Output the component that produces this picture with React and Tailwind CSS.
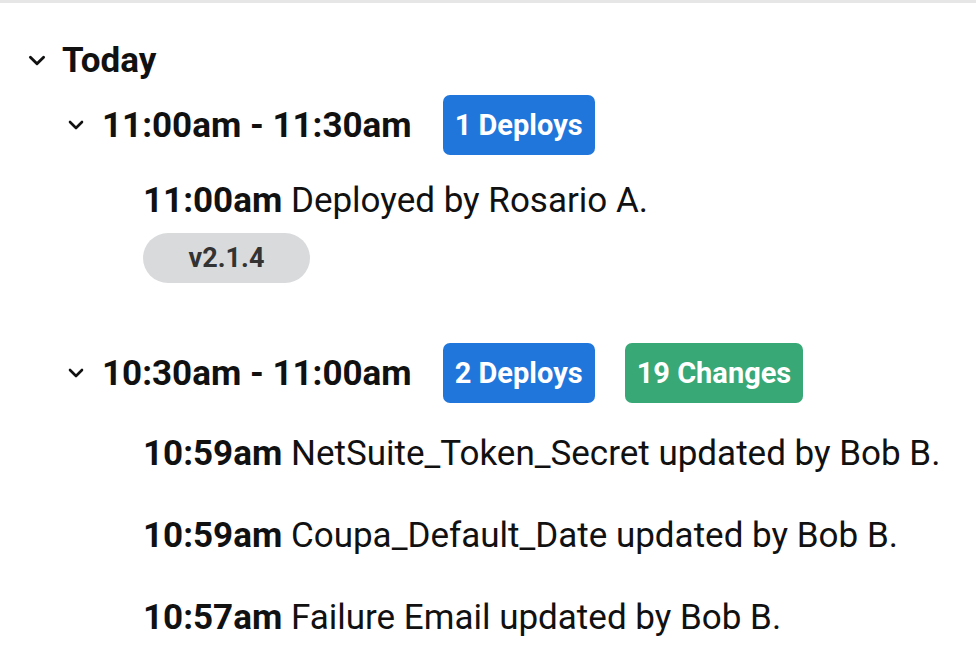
const Chevron = ({ className }) => (
  <svg className={className} viewBox="0 0 16 10" fill="none" stroke="#111" strokeWidth="2.6" strokeLinecap="round" strokeLinejoin="round">
    <path d="M2 2l6 6 6-6" />
  </svg>
);

const groups = [
  {
    range: "11:00am - 11:30am",
    badges: [{ label: "1 Deploys", color: "bg-[#2176db]" }],
    items: [{ time: "11:00am", text: "Deployed by Rosario A.", tag: "v2.1.4" }],
  },
  {
    range: "10:30am - 11:00am",
    badges: [
      { label: "2 Deploys", color: "bg-[#2176db]" },
      { label: "19 Changes", color: "bg-[#38a876]" },
    ],
    items: [
      { time: "10:59am", text: "NetSuite_Token_Secret updated by Bob B." },
      { time: "10:59am", text: "Coupa_Default_Date updated by Bob B." },
      { time: "10:57am", text: "Failure Email updated by Bob B." },
    ],
  },
];

const App = () => {
  return (
    <div className="min-h-screen bg-white text-[#111] font-['Roboto',sans-serif] border-t-[3px] border-[#e6e6e6]">
      <div className="pl-[28px] pt-[35px]">
        <div className="flex items-center h-[44px]">
          <Chevron className="w-[18px] h-[11px]" />
          <span className="ml-[16px] text-[35px] font-bold leading-none">Today</span>
        </div>

        <div className="flex flex-col">
          {groups.map((g, gi) => (
            <section key={gi} className={gi === 0 ? "mt-[13px]" : "mt-[60px]"}>
              <div className="flex items-center pl-[40px] h-[60px]">
                <Chevron className="w-[16px] h-[10px]" />
                <span className="ml-[18px] text-[35px] font-bold leading-none">{g.range}</span>
                <div className="flex gap-[30px] ml-[31px]">
                  {g.badges.map((b) => (
                    <span key={b.label} className={`${b.color} text-white font-bold text-[29px] leading-none h-[60px] px-[12px] rounded-[7px] flex items-center`}>
                      {b.label}
                    </span>
                  ))}
                </div>
              </div>

              <div className={`flex flex-col pl-[115px] gap-[42px] ${gi === 0 ? "mt-[26px]" : "mt-[31px]"}`}>
                {g.items.map((it, i) => (
                  <div key={i} className="flex flex-col">
                    <p className="text-[35px] leading-[40px]">
                      <span className="font-bold">{it.time}</span> {it.text}
                    </p>
                    {it.tag && (
                      <span className="mt-[12px] w-[167px] h-[50px] rounded-full bg-[#d9dadc] text-[#333] font-bold text-[27px] flex items-center justify-center">
                        {it.tag}
                      </span>
                    )}
                  </div>
                ))}
              </div>
            </section>
          ))}
        </div>
      </div>
    </div>
  );
};

export default App;
